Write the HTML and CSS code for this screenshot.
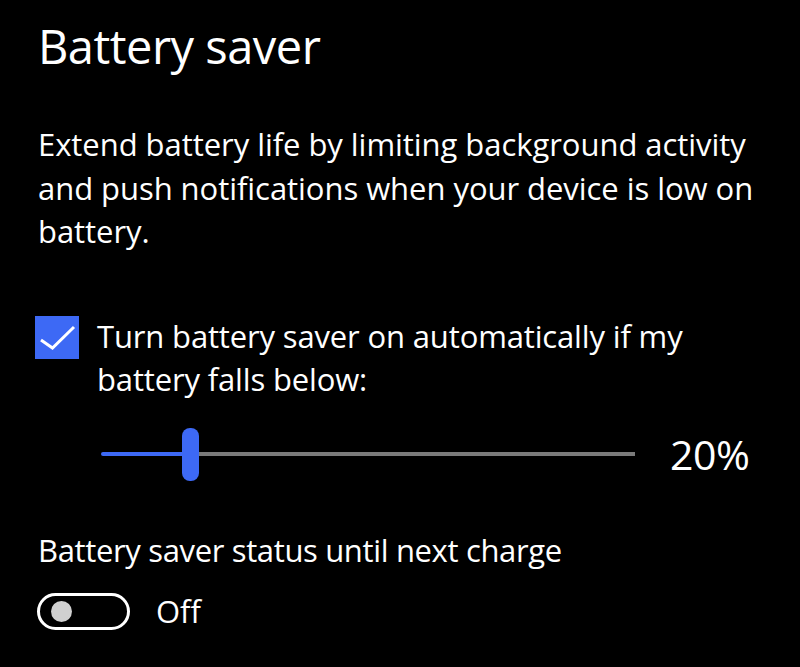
FILE: index.html
```html
<!DOCTYPE html>
<html lang="en">
<head>
    <meta charset="UTF-8">
    <meta name="viewport" content="width=device-width, initial-scale=1.0">
    <title>Battery saver</title>
    <link rel="stylesheet" href="styles.css">
</head>
<body>

<div class="page">
    <h1>Battery saver</h1>
    <p class="intro">Extend battery life by limiting background activity and push notifications when your device is low on battery.</p>

    <div class="check-row">
        <span class="checkbox">
            <svg width="44" height="43" viewBox="0 0 44 43">
                <polyline points="6,24 17.5,32 39,11" fill="none" stroke="#fff" stroke-width="3"/>
            </svg>
        </span>
        <span class="check-label">Turn battery saver on automatically if my battery falls below:</span>
    </div>

    <div class="slider-row">
        <div class="slider">
            <div class="slider-fill" style="width: 15.2%"></div>
            <div class="slider-thumb"></div>
            <div class="slider-rest"></div>
        </div>
        <span class="slider-value">20%</span>
    </div>

    <div class="status-label">Battery saver status until next charge</div>
    <div class="toggle-row">
        <span class="toggle"><span class="knob"></span></span>
        <span class="toggle-text">Off</span>
    </div>
</div>

</body>
</html>
```

FILE: styles.css
```css
body {
    margin: 0;
    background: #000;
    color: #fff;
    font-family: 'Open Sans', sans-serif;
}
.page {
    padding: 14px 30px 0 38px;
}
h1 {
    font-size: 47px;
    font-weight: 400;
    margin: 0;
    line-height: 64px;
    letter-spacing: -0.5px;
}
.intro {
    font-size: 31px;
    line-height: 43.5px;
    margin: 45px 0 0 0;
    letter-spacing: -0.05px;
}
.check-row {
    display: flex;
    align-items: flex-start;
    margin-top: 61px;
    margin-left: -3px;
}
.checkbox {
    width: 44px;
    height: 43px;
    background: #3d69f5;
    flex-shrink: 0;
    margin-top: 1px;
}
.checkbox svg {
    display: block;
}
.check-label {
    font-size: 31px;
    line-height: 43.5px;
    margin-left: 18px;
    letter-spacing: -0.15px;
}
.slider-row {
    display: flex;
    align-items: center;
    margin-top: 26px;
    margin-left: 63px;
}
.slider {
    width: 534px;
    height: 53px;
    display: flex;
    align-items: center;
}
.slider-fill {
    height: 4px;
    background: #3d69f5;
    border-radius: 2px 0 0 2px;
}
.slider-thumb {
    width: 17px;
    height: 53px;
    border-radius: 8px;
    background: #3d69f5;
    flex-shrink: 0;
}
.slider-rest {
    flex: 1;
    height: 4px;
    background: #7a7a7a;
}
.slider-value {
    font-size: 41px;
    line-height: 53px;
    margin-left: 35px;
    letter-spacing: -0.4px;
}
.status-label {
    font-size: 31px;
    line-height: 43.5px;
    margin-top: 48px;
    letter-spacing: -0.35px;
}
.toggle-row {
    display: flex;
    align-items: center;
    margin-top: 21px;
}
.toggle {
    width: 76px;
    height: 31px;
    border: 3px solid #fff;
    border-radius: 20px;
    display: flex;
    align-items: center;
    padding-left: 11px;
    margin-left: -1px;
}
.knob {
    width: 21px;
    height: 21px;
    border-radius: 50%;
    background: #d0d0d0;
}
.toggle-text {
    font-size: 31px;
    line-height: 37px;
    margin-left: 26px;
}
```
